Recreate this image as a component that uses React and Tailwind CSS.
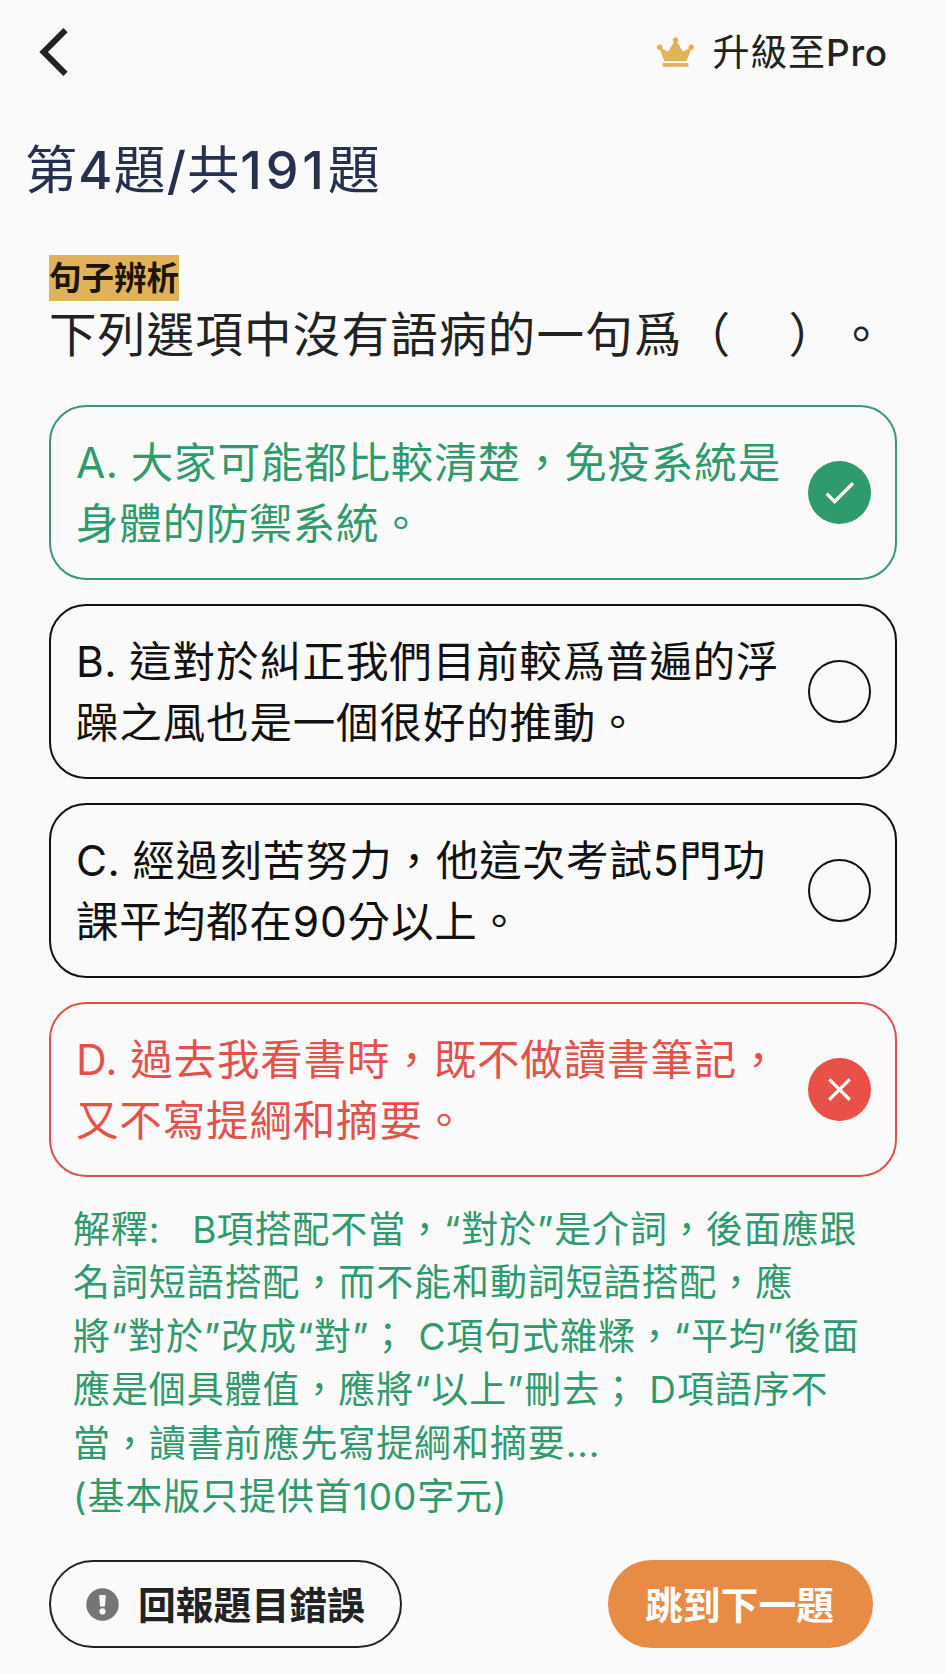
import { FaCrown } from 'react-icons/fa'
import { MdCheck, MdClose } from 'react-icons/md'

const options = [
  { id: 'A', status: 'correct', lines: ['大家可能都比較清楚，免疫系統是', '身體的防禦系統。'] },
  { id: 'B', status: 'idle', lines: ['這對於糾正我們目前較爲普遍的浮', '躁之風也是一個很好的推動。'] },
  { id: 'C', status: 'idle', lines: ['經過刻苦努力，他這次考試5門功', '課平均都在90分以上。'] },
  { id: 'D', status: 'wrong', lines: ['過去我看書時，既不做讀書筆記，', '又不寫提綱和摘要。'] }
]

const explanation = [
  '名詞短語搭配，而不能和動詞短語搭配，應',
  '將“對於”改成“對”； C項句式雜糅，“平均”後面',
  '應是個具體值，應將“以上”刪去； D項語序不',
  '當，讀書前應先寫提綱和摘要...',
  '(基本版只提供首100字元)'
]

const cardColors = {
  correct: 'border-[#3a976f] text-[#2f9a6c]',
  wrong: 'border-[#dc524a] text-[#e2524a]',
  idle: 'border-[#111111] text-[#111111]'
}

function StatusMark({ status }) {
  if (status === 'correct') {
    return (
      <span className="flex size-[63.5px] shrink-0 items-center justify-center rounded-full bg-[#2f9a6c] text-white">
        <MdCheck className="size-[39px]" />
      </span>
    )
  }
  if (status === 'wrong') {
    return (
      <span className="flex size-[63.5px] shrink-0 items-center justify-center rounded-full bg-[#e95148] text-white">
        <MdClose className="size-[39px]" />
      </span>
    )
  }
  return <span className="size-[63.5px] shrink-0 rounded-full border-2 border-[#111111]" />
}

function Option({ option }) {
  return (
    <button
      className={`flex h-[175px] w-full items-center justify-between rounded-[37px] border-2 pr-6 pl-[25px] text-left text-[42.5px] leading-[61px] font-[390] tracking-[0.85px] whitespace-pre ${cardColors[option.status]}`}
    >
      <span>
        <span className="block">
          <span className="tracking-[0.4px]">{option.id}. </span>
          {option.lines[0]}
        </span>
        <span className="block">{option.lines[1]}</span>
      </span>
      <StatusMark status={option.status} />
    </button>
  )
}

export default function App() {
  return (
    <div
      lang="zh-Hant"
      className="flex h-[1674px] w-[945px] flex-col overflow-hidden bg-[#fafafa] font-['Inter','Noto_Sans_CJK_TC',sans-serif] text-[#222222]"
    >
      <header className="flex h-[103px] items-center justify-between pr-[57px] pl-[39px]">
        <svg className="h-[48px] w-[29px]" viewBox="0 0 11.67 19.8" fill="currentColor">
          <path d="M11.67 1.77 9.9 0 0 9.9l9.9 9.9 1.77-1.77L3.54 9.9z" />
        </svg>
        <div className="flex items-center gap-[19px] pt-px">
          <FaCrown className="h-[30px] w-[37px] text-[#e0b35b]" />
          <span className="text-[37px] leading-none font-[390] tracking-[0.8px]">
            升級至<span className="font-medium">Pro</span>
          </span>
        </div>
      </header>

      <h1 className="mt-[38px] pl-[25px] text-[52px] leading-[60px] font-normal tracking-[1.2px] text-[#27304f]">
        第<span className="font-medium">4</span>題<span className="font-medium">/</span>共
        <span className="font-medium tracking-[3.8px]">191</span>題
      </h1>

      <main className="flex flex-col pt-[54px] pr-12 pl-[49px]">
        <div>
          <span className="block h-[46px] w-[130px] bg-[#e0b35b] text-[32.5px] leading-[47px] font-semibold whitespace-nowrap text-[#1c1405]">
            句子辨析
          </span>
        </div>
        <p className="h-[104px] text-[47.5px] leading-[67px] font-[390] tracking-[1.25px] whitespace-nowrap [text-spacing-trim:space-all]">
          下列選項中沒有語病的一句爲（<span className="inline-block w-[57px]" />）。
        </p>

        <div className="flex flex-col gap-6">
          {options.map(option => (
            <Option key={option.id} option={option} />
          ))}
        </div>

        <div className="mt-[26px] pl-6 text-[37px] leading-[53.4px] font-[390] tracking-[0.9px] whitespace-pre text-[#2f9a6c]">
          <p>解釋:<span className="tracking-[0.2px]">   B</span>項搭配不當，“對於”是介詞，後面應跟</p>
          {explanation.map(line => (
            <p key={line}>{line}</p>
          ))}
        </div>

        <div className="mt-[37px] flex justify-between pr-6">
          <button className="flex h-[88px] w-[353px] items-center gap-[19px] rounded-full border-2 border-[#222222] pl-[35px] text-[37.8px] font-bold whitespace-nowrap">
            <svg className="size-[33px] shrink-0" viewBox="0 0 33 33">
              <circle cx="16.5" cy="16.5" r="16.2" fill="#757575" />
              <path d="M13.2 8.2q-.1-1.2 1.1-1.2h4.4q1.2 0 1.1 1.2l-.9 10.2h-4.8z" fill="#fafafa" />
              <circle cx="16.5" cy="23.4" r="3.1" fill="#fafafa" />
            </svg>
            <span className="pt-0.5">回報題目錯誤</span>
          </button>
          <button className="flex h-[88px] w-[265px] items-center justify-center rounded-full bg-[#e88b45] pt-0.5 pr-0.5 text-[37.8px] font-bold whitespace-nowrap text-white">
            跳到下一題
          </button>
        </div>
      </main>
    </div>
  )
}
